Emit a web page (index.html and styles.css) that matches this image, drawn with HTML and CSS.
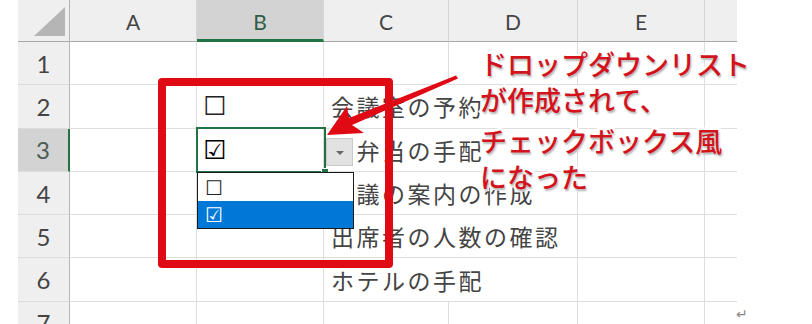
FILE: index.html
```html
<!DOCTYPE html>
<html lang="ja">
<head>
    <meta charset="UTF-8">
    <meta name="viewport" content="width=device-width, initial-scale=1.0">
    <title>ドロップダウンリスト チェックボックス風</title>
    <link rel="stylesheet" href="styles.css">
</head>
<body>
    <div class="screen">
        <!-- Sheet grid -->
        <div class="sheet">
            <div class="corner"><span class="tri"></span></div>
            <div class="col-head">A</div>
            <div class="col-head sel">B</div>
            <div class="col-head">C</div>
            <div class="col-head">D</div>
            <div class="col-head">E</div>
            <div class="col-head last"></div>

            <div class="row-head">1</div>
            <div class="cell"></div>
            <div class="cell"></div>
            <div class="cell"></div>
            <div class="cell"></div>
            <div class="cell"></div>
            <div class="cell last"></div>

            <div class="row-head">2</div>
            <div class="cell"></div>
            <div class="cell box">☐</div>
            <div class="cell text">会議室の予約</div>
            <div class="cell"></div>
            <div class="cell"></div>
            <div class="cell last"></div>

            <div class="row-head sel">3</div>
            <div class="cell"></div>
            <div class="cell box checked">☑</div>
            <div class="cell text">お弁当の手配</div>
            <div class="cell"></div>
            <div class="cell"></div>
            <div class="cell last"></div>

            <div class="row-head">4</div>
            <div class="cell"></div>
            <div class="cell"></div>
            <div class="cell text">会議の案内の作成</div>
            <div class="cell"></div>
            <div class="cell"></div>
            <div class="cell last"></div>

            <div class="row-head">5</div>
            <div class="cell"></div>
            <div class="cell"></div>
            <div class="cell text">出席者の人数の確認</div>
            <div class="cell"></div>
            <div class="cell"></div>
            <div class="cell last"></div>

            <div class="row-head">6</div>
            <div class="cell"></div>
            <div class="cell"></div>
            <div class="cell text">ホテルの手配</div>
            <div class="cell"></div>
            <div class="cell"></div>
            <div class="cell last"></div>

            <div class="row-head">7</div>
            <div class="cell"></div>
            <div class="cell"></div>
            <div class="cell"></div>
            <div class="cell"></div>
            <div class="cell"></div>
            <div class="cell last"></div>
        </div>

        <!-- Active cell + dropdown -->
        <div class="pick"></div>
        <div class="handle"></div>
        <div class="drop-btn"><span class="caret"></span></div>
        <div class="drop-list">
            <div class="opt">☐</div>
            <div class="opt on">☑</div>
        </div>

        <!-- Annotation -->
        <div class="frame"></div>
        <svg class="arrow" width="812" height="324" viewBox="0 0 812 324">
            <polygon points="327,135 347,106 349,118 456,75.5 458,78.5 352,125 364,133" fill="#df0a14"/>
        </svg>
        <div class="note">
            <div>ドロップダウンリスト</div>
            <div>が作成されて、</div>
            <div class="l3">チェックボックス風</div>
            <div>になった</div>
        </div>

        <div class="ret">↵</div>
    </div>
</body>
</html>
```

FILE: styles.css
```css
body {
    margin: 0;
    padding: 0;
    background-color: #fff;
    font-family: "Noto Sans CJK JP", sans-serif;
}
.screen {
    position: relative;
    width: 812px;
    height: 324px;
    overflow: hidden;
    background-color: #fff;
}
.sheet {
    display: grid;
    grid-template-columns: 52px 127px 127px 125px 129px 127px 32px;
    grid-template-rows: 42px repeat(7, 43.3px);
    margin-left: 18px;
    width: 719px;
}
.corner {
    display: flex;
    justify-content: flex-end;
    align-items: flex-end;
    padding: 0 4px 5px 0;
    background-color: #efefef;
    border-right: 1px solid #b5b5b5;
    border-bottom: 1px solid #a9a9a9;
    box-sizing: border-box;
}
.tri {
    width: 0;
    height: 0;
    border-left: 31px solid transparent;
    border-bottom: 29px solid #b5b5b5;
}
.col-head {
    display: flex;
    justify-content: center;
    align-items: center;
    background-color: #efefef;
    border-right: 1px solid #d6d6d6;
    border-bottom: 1px solid #a9a9a9;
    box-sizing: border-box;
    font-family: Lato, "Liberation Sans", sans-serif;
    font-size: 21px;
    color: #444;
    padding-top: 2px;
}
.col-head.sel {
    background-color: #d3d3d3;
    border-bottom: 3px solid #217346;
    color: #2f5d48;
    padding-top: 4px;
}
.col-head.last {
    border-right: none;
}
.row-head {
    display: flex;
    justify-content: center;
    align-items: center;
    background-color: #efefef;
    border-right: 1px solid #b5b5b5;
    border-bottom: 1px solid #dcdcdc;
    box-sizing: border-box;
    font-family: Lato, "Liberation Sans", sans-serif;
    font-size: 24px;
    color: #444;
}
.row-head.sel {
    background-color: #d3d3d3;
    border-right: 2px solid #217346;
    color: #4d5d55;
}
.cell {
    display: flex;
    align-items: center;
    border-right: 1px solid #dedede;
    border-bottom: 1px solid #dedede;
    box-sizing: border-box;
    white-space: nowrap;
}
.cell.last {
    border-right: none;
}
.cell.text {
    border-right: none;
    padding-left: 7px;
    font-size: 23px;
    letter-spacing: 2.5px;
    color: #444;
}
.cell.box {
    padding-left: 6px;
    font-family: "DejaVu Sans", sans-serif;
    font-size: 26px;
    color: #222;
}
.cell.checked {
    color: #000;
}
.pick {
    position: absolute;
    left: 196px;
    top: 127px;
    width: 130px;
    height: 46px;
    border: 2px solid #217346;
    box-sizing: border-box;
}
.handle {
    position: absolute;
    left: 321px;
    top: 168px;
    width: 6px;
    height: 6px;
    background-color: #217346;
    border: 1px solid #fff;
}
.drop-btn {
    position: absolute;
    left: 326px;
    top: 138px;
    width: 27px;
    height: 28px;
    display: flex;
    justify-content: center;
    align-items: center;
    background-color: #e2e2e2;
    border: 1px solid #cacaca;
    box-sizing: border-box;
}
.caret {
    width: 0;
    height: 0;
    border-left: 4px solid transparent;
    border-right: 4px solid transparent;
    border-top: 4px solid #666;
    margin-top: 2px;
}
.drop-list {
    position: absolute;
    left: 197px;
    top: 172px;
    width: 157px;
    height: 57px;
    border: 1px solid #1b1b1b;
    box-sizing: border-box;
    background-color: #fff;
    padding-top: 1px;
}
.opt {
    height: 27px;
    display: flex;
    align-items: center;
    padding-left: 7px;
    font-family: "DejaVu Sans", sans-serif;
    font-size: 20px;
    color: #222;
}
.opt.on {
    background-color: #0078d7;
    color: #fff;
}
.frame {
    position: absolute;
    left: 158px;
    top: 78px;
    width: 235px;
    height: 190px;
    border: 8px solid #df0a14;
    border-radius: 4px;
    box-sizing: border-box;
}
.arrow {
    position: absolute;
    left: 0;
    top: 0;
}
.note {
    position: absolute;
    left: 480px;
    top: 46px;
    font-size: 27px;
    font-weight: 500;
    line-height: 36px;
    color: #d3121c;
    -webkit-text-stroke: 5px #fff;
    paint-order: stroke fill;
    text-shadow: 1px 2px 2px rgba(0, 0, 0, 0.3);
    white-space: nowrap;
}
.note .l3 {
    margin-top: 5px;
}
.ret {
    position: absolute;
    left: 736px;
    top: 306px;
    font-family: "DejaVu Sans", sans-serif;
    font-size: 14px;
    color: #888;
}
```
